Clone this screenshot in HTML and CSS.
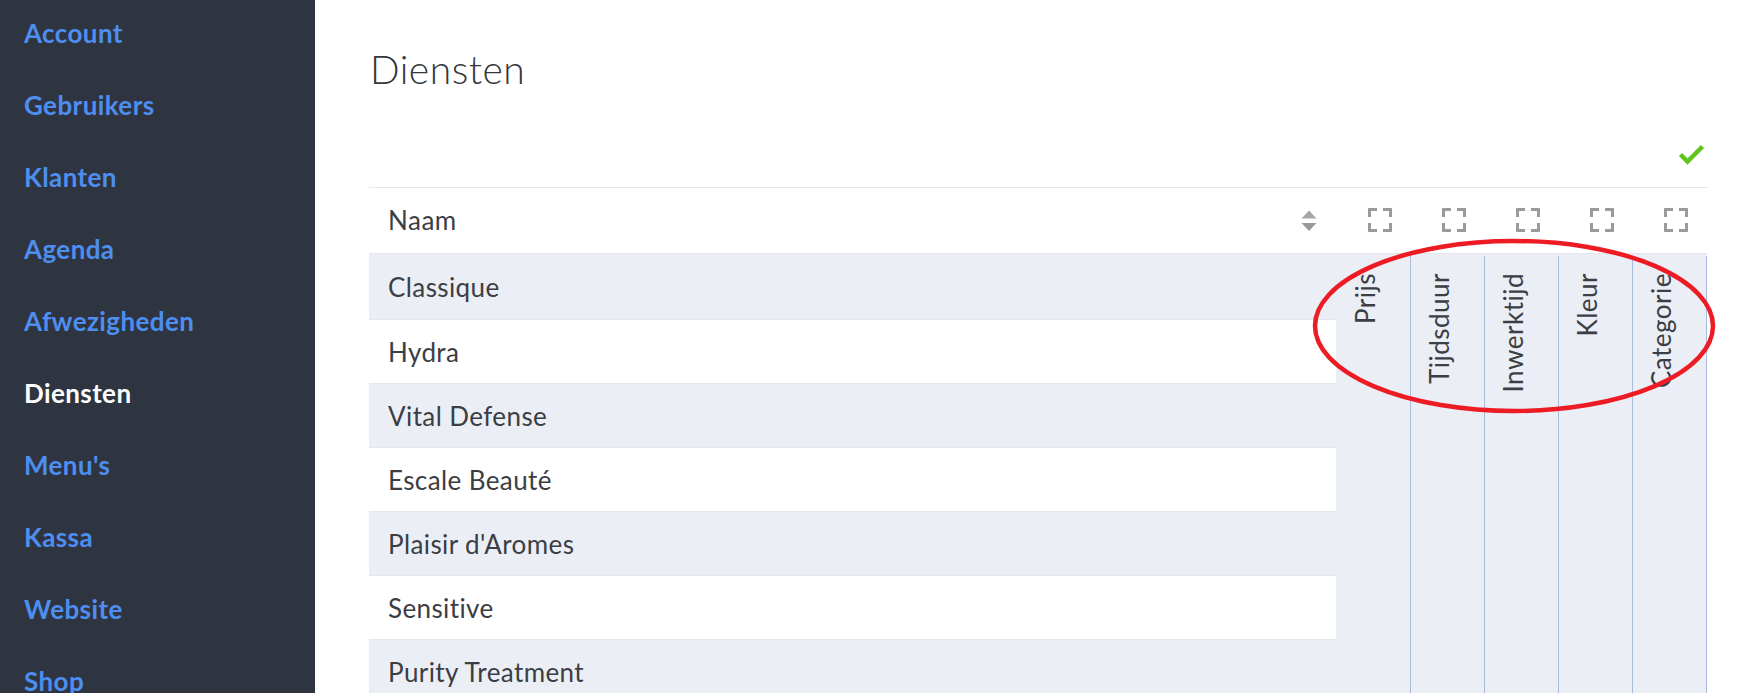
FILE: index.html
```html
<!DOCTYPE html>
<html lang="nl">
<head>
<meta charset="utf-8">
<title>Diensten</title>
<link rel="stylesheet" href="styles.css">
</head>
<body>
<div class="app">
  <aside class="sidebar">
    <nav class="nav">
      <a class="nav-item" href="#">Account</a>
      <a class="nav-item" href="#">Gebruikers</a>
      <a class="nav-item" href="#">Klanten</a>
      <a class="nav-item" href="#">Agenda</a>
      <a class="nav-item" href="#">Afwezigheden</a>
      <a class="nav-item active" href="#">Diensten</a>
      <a class="nav-item" href="#">Menu's</a>
      <a class="nav-item" href="#">Kassa</a>
      <a class="nav-item" href="#">Website</a>
      <a class="nav-item" href="#">Shop</a>
    </nav>
  </aside>
  <main class="main">
    <h1 class="title">Diensten</h1>
    <div class="toolbar">
      <svg class="check" width="27" height="21" viewBox="0 0 27 21"><polyline points="2.5,10.5 9.5,17.5 24.5,2.5" fill="none" stroke="#5ec51f" stroke-width="4.5" stroke-linejoin="miter"/></svg>
    </div>
    <div class="table">
      <div class="thead">
        <div class="th-name">
          <span>Naam</span>
          <svg class="sort" width="16" height="22" viewBox="0 0 16 22"><polygon points="0.5,8.5 15.5,8.5 8,0.5" fill="#a6a6a6"/><polygon points="0.5,13 15.5,13 8,21" fill="#9a9a9a"/></svg>
        </div>
        <div class="th-icon"><svg width="24" height="24" viewBox="0 0 24 24"><path d="M1.5 9V1.5H9M15 1.5H22.5V9M22.5 15V22.5H15M9 22.5H1.5V15" fill="none" stroke="#9b9b9b" stroke-width="3"/></svg></div>
        <div class="th-icon"><svg width="24" height="24" viewBox="0 0 24 24"><path d="M1.5 9V1.5H9M15 1.5H22.5V9M22.5 15V22.5H15M9 22.5H1.5V15" fill="none" stroke="#9b9b9b" stroke-width="3"/></svg></div>
        <div class="th-icon"><svg width="24" height="24" viewBox="0 0 24 24"><path d="M1.5 9V1.5H9M15 1.5H22.5V9M22.5 15V22.5H15M9 22.5H1.5V15" fill="none" stroke="#9b9b9b" stroke-width="3"/></svg></div>
        <div class="th-icon"><svg width="24" height="24" viewBox="0 0 24 24"><path d="M1.5 9V1.5H9M15 1.5H22.5V9M22.5 15V22.5H15M9 22.5H1.5V15" fill="none" stroke="#9b9b9b" stroke-width="3"/></svg></div>
        <div class="th-icon"><svg width="24" height="24" viewBox="0 0 24 24"><path d="M1.5 9V1.5H9M15 1.5H22.5V9M22.5 15V22.5H15M9 22.5H1.5V15" fill="none" stroke="#9b9b9b" stroke-width="3"/></svg></div>
      </div>
      <div class="tbody">
        <div class="rows">
          <div class="row stripe first">Classique</div>
          <div class="row">Hydra</div>
          <div class="row stripe">Vital Defense</div>
          <div class="row">Escale Beauté</div>
          <div class="row stripe">Plaisir d'Aromes</div>
          <div class="row">Sensitive</div>
          <div class="row stripe">Purity Treatment</div>
        </div>
        <div class="cols">
          <div class="col"><span class="vlabel">Prijs</span></div>
          <div class="col"><span class="vlabel">Tijdsduur</span></div>
          <div class="col"><span class="vlabel">Inwerktijd</span></div>
          <div class="col"><span class="vlabel">Kleur</span></div>
          <div class="col"><span class="vlabel">Categorie</span></div>
        </div>
      </div>
    </div>
  </main>
</div>
<svg class="annotation" width="410" height="182" viewBox="0 0 410 182"><ellipse cx="203" cy="89" rx="199" ry="85" fill="none" stroke="#ed1c24" stroke-width="4.5"/></svg>
</body>
</html>
```

FILE: styles.css
```css
* { box-sizing: border-box; }
html, body {
  margin: 0;
  padding: 0;
  height: 100%;
  overflow: hidden;
  background: #ffffff;
}
body {
  font-family: "Lato", "Liberation Sans", sans-serif;
  color: #3b3e44;
  position: relative;
}
.app {
  display: flex;
  height: 693px;
}
.sidebar {
  width: 315px;
  flex: 0 0 315px;
  background: #2f3540;
  overflow: hidden;
}
.nav {
  display: flex;
  flex-direction: column;
  margin-top: -3px;
}
.nav-item {
  display: block;
  height: 72px;
  flex: 0 0 72px;
  line-height: 72px;
  padding-left: 24px;
  font-size: 26px;
  font-weight: 700;
  color: #4d8ef0;
  text-decoration: none;
  white-space: nowrap;
  letter-spacing: 0.4px;
}
.nav-item.active { color: #ffffff; }
.main {
  flex: 1;
  padding: 0 46px 0 54px;
  display: flex;
  flex-direction: column;
  min-height: 0;
}
.title {
  flex: 0 0 auto;
  margin: 46px 0 0;
  font-size: 39px;
  line-height: 47px;
  font-weight: 300;
  color: #33363b;
  padding-left: 1px;
  letter-spacing: 0.5px;
}
.toolbar {
  flex: 0 0 94px;
  height: 94px;
  display: flex;
  justify-content: flex-end;
  align-items: flex-end;
  padding-bottom: 22px;
  padding-right: 2px;
}
.table {
  border-top: 1px solid #e6e7ea;
  display: flex;
  flex-direction: column;
  flex: 0 0 auto;
}
.thead {
  flex: 0 0 65px;
  height: 65px;
  display: flex;
  align-items: center;
  padding-bottom: 2px;
}
.th-name {
  width: 967px;
  flex: 0 0 967px;
  display: flex;
  align-items: center;
  justify-content: space-between;
  padding: 0 19px 0 19px;
  font-size: 26px;
  letter-spacing: 0.5px;
}
.th-name .sort { margin-top: 2px; }
.th-icon {
  width: 74px;
  flex: 0 0 74px;
  display: flex;
  padding-left: 32px;
  padding-top: 1px;
}
.th-icon svg { display: block; }
.tbody {
  display: flex;
  flex: 0 0 auto;
}
.rows {
  width: 967px;
  flex: 0 0 967px;
  display: flex;
  flex-direction: column;
}
.row {
  height: 64px;
  flex: 0 0 64px;
  display: flex;
  align-items: center;
  padding-left: 19px;
  border-top: 1px solid #e5e7ec;
  font-size: 26px;
  letter-spacing: 0.4px;
  background: #ffffff;
}
.row.first { height: 66px; flex-basis: 66px; }
.row.stripe { background: #ebeef5; }
.cols {
  width: 371px;
  flex: 0 0 371px;
  display: flex;
  background: #ebeef5;
  border-top: 1px solid #e5e7ec;
  padding-left: 1px;
}
.col {
  width: 74px;
  flex: 0 0 74px;
  margin-top: 2px;
  border-right: 1px solid #a9bcdc;
  display: flex;
  flex-direction: column;
  align-items: flex-start;
  padding: 17px 0 0 13px;
}
.vlabel {
  writing-mode: vertical-rl;
  transform: rotate(180deg);
  font-size: 26px;
  line-height: 31px;
  letter-spacing: 0.5px;
  white-space: nowrap;
}
.annotation {
  position: absolute;
  left: 1311px;
  top: 237px;
  pointer-events: none;
}
```
